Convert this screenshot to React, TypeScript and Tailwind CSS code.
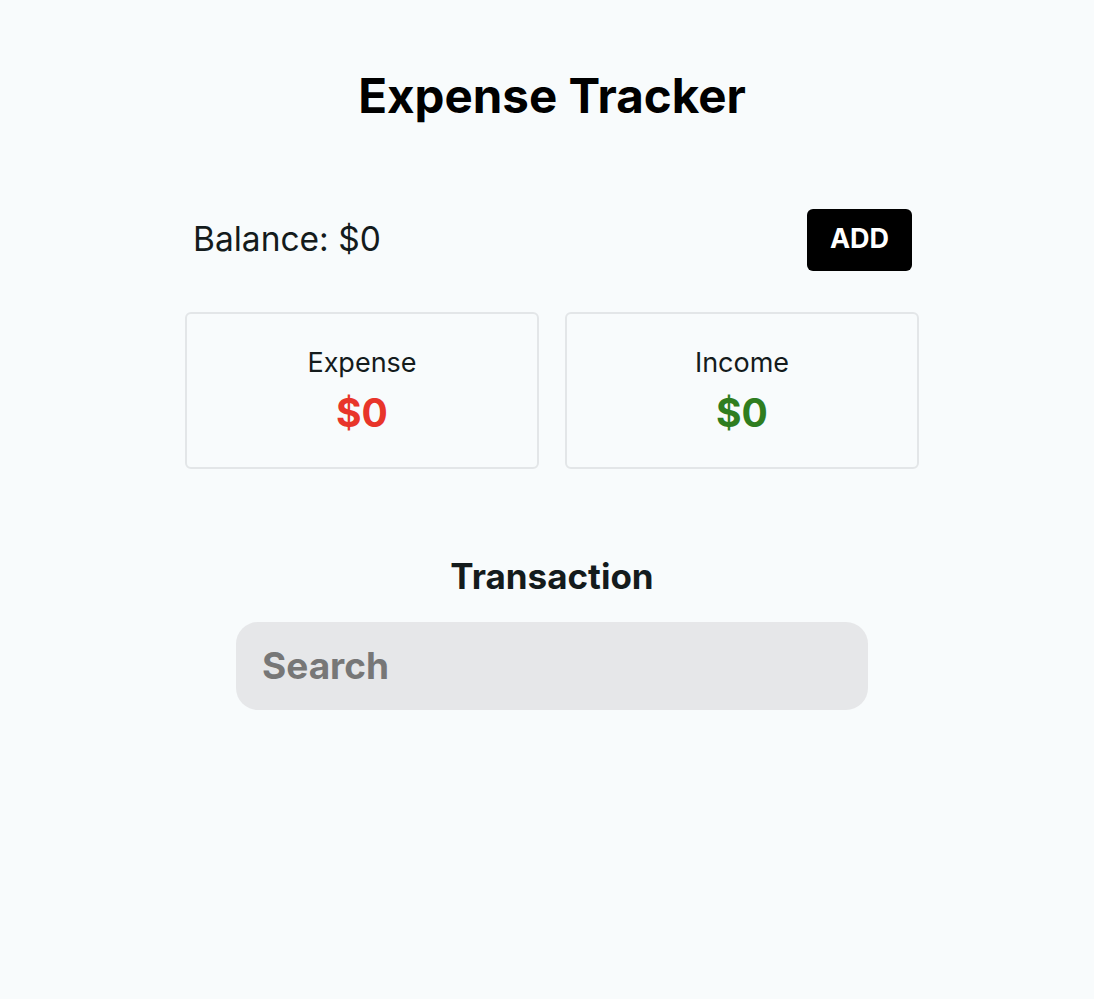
import React from "react";

const Card = ({ label, color }: { label: string; color: string }) => (
  <div className="flex h-[157px] flex-1 flex-col items-center justify-center rounded-md border-2 border-[#e3e6e8]">
    <span className="text-[27px] leading-none text-[#141b1c]">{label}</span>
    <span className={`mt-[17px] text-[39px] font-bold leading-none ${color}`}>$0</span>
  </div>
);

export default function App() {
  return (
    <div className="min-h-screen bg-[#f8fbfc] pl-[10px] font-['Inter',sans-serif] text-[#141b1c]">
      <div className="mx-auto flex w-[734px] flex-col items-center pt-[72px]">
        <h1 className="text-[47.5px] font-bold leading-none text-black">Expense Tracker</h1>

        <div className="mt-[89px] flex w-full items-center justify-between pl-[8px] pr-[7px]">
          <span className="text-[33.5px] leading-none">Balance: $0</span>
          <button className="h-[62px] w-[105px] rounded-md bg-black text-[27px] font-bold text-white">
            ADD
          </button>
        </div>

        <div className="mt-[41px] flex w-full gap-[26px]">
          <Card label="Expense" color="text-[#e8352a]" />
          <Card label="Income" color="text-[#2f7d1f]" />
        </div>

        <h2 className="mt-[90px] text-[35px] font-bold leading-none">Transaction</h2>

        <input
          placeholder="Search"
          className="mt-[28px] h-[88px] w-[632px] rounded-[22px] bg-[#e6e7e9] px-[26px] text-[37px] font-bold outline-none placeholder:text-[#777777]"
        />
      </div>
    </div>
  );
}
